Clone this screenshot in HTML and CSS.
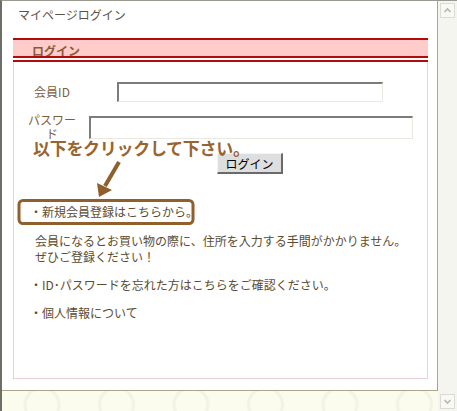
FILE: index.html
```html
<!DOCTYPE html>
<html lang="ja">
<head>
<meta charset="utf-8">
<title>マイページログイン</title>
<link rel="stylesheet" href="styles.css">
</head>
<body>
<div class="frame">
  <div class="page">
    <div class="sheet">
      <div class="title">マイページログイン</div>
      <div class="box">
        <div class="box-head"><h2>ログイン</h2></div>
        <div class="box-body">
          <div class="row row-id">
            <label class="lbl">会員ID</label>
            <input class="inp inp-id" type="text">
          </div>
          <div class="row row-pw">
            <label class="lbl">パスワード</label>
            <input class="inp inp-pw" type="password">
          </div>
          <div class="btn-row"><button class="btn">ログイン</button></div>
          <p class="item item-first">・新規会員登録はこちらから。</p>
          <p class="note">会員になるとお買い物の際に、住所を入力する手間がかかりません。<br>ぜひご登録ください！</p>
          <p class="item">・ID･パスワードを忘れた方はこちらをご確認ください。</p>
          <p class="item">・個人情報について</p>
        </div>
      </div>
    </div>
    <div class="band"></div>
  </div>
  <div class="scrollbar">
    <div class="sb-btn sb-up">
      <svg width="13" height="13" viewBox="0 0 13 13"><path d="M3.5 8 L6.5 5 L9.5 8" fill="none" stroke="#b8b8b0" stroke-width="1.6"/></svg>
    </div>
    <div class="sb-track"></div>
    <div class="sb-btn sb-down">
      <svg width="13" height="13" viewBox="0 0 13 13"><path d="M3.5 5 L6.5 8 L9.5 5" fill="none" stroke="#b8b8b0" stroke-width="1.6"/></svg>
    </div>
  </div>
</div>
<div class="annot-text">以下をクリックして下さい。</div>
<svg class="annot" width="457" height="411" viewBox="0 0 457 411">
  <line x1="119" y1="162" x2="105" y2="186" stroke="#8f5f2c" stroke-width="4"/>
  <polygon points="99,197 97,183 112,190" fill="#8f5f2c"/>
  <rect x="19" y="200.5" width="174" height="23" rx="4" ry="4" fill="none" stroke="#8f5f2c" stroke-width="3"/>
</svg>
</body>
</html>
```
FILE: styles.css
```css
* { box-sizing: border-box; }
html, body { margin: 0; padding: 0; }
body {
  position: relative;
  width: 457px;
  height: 411px;
  overflow: hidden;
  background: #fbfbee;
  font-family: "Noto Sans CJK JP", "Noto Sans", sans-serif;
  font-size: 12px;
  color: #5c4c30;
}
.frame {
  display: flex;
  height: 411px;
  border-top: 1px solid #9a9a92;
  border-left: 2px solid #6e6e68;
}
.page {
  width: 436px;
  display: flex;
  flex-direction: column;
}
.sheet {
  height: 390px;
  background: #fff;
  border-right: 1px solid #a9a68c;
  border-bottom: 1px solid #a9a68c;
  padding: 7px 0 0 0;
}
.title {
  padding-left: 16px;
  line-height: 14px;
  height: 14px;
  color: #5e5346;
}
.box {
  margin: 16px 0 0 11px;
  width: 415px;
}
.box-head {
  height: 24px;
  background: #ffcccc;
  background-clip: padding-box;
  border-top: 2px solid #b30a0a;
  border-bottom: 6px double #b30a0a;
  overflow: hidden;
}
.box-head h2 {
  margin: 0;
  padding: 4px 0 0 19px;
  font-size: 12px;
  line-height: 14px;
  font-weight: bold;
  color: #8c5a3a;
}
.box-body {
  height: 317px;
  border: 1px solid #ecd0d4;
  border-top: 0;
  padding: 20px 0 0 11px;
}
.row {
  display: flex;
}
.row-id {
  align-items: center;
  height: 20px;
}
.row-pw {
  align-items: flex-start;
  margin-top: 11px;
}
.lbl {
  width: 54px;
  text-align: center;
  line-height: 14px;
  color: #7d5f3a;
}
.inp {
  display: block;
  margin: 0;
  padding: 0;
  background: #fff;
  border-style: solid;
  border-width: 2px 1px 1px 2px;
  border-color: #7c7c7c #ebe8e0 #ebe8e0 #7c7c7c;
}
.inp-id {
  width: 266px;
  height: 20px;
  margin-left: 38px;
}
.inp-pw {
  width: 324px;
  height: 23px;
  margin-left: 10px;
  margin-top: 3px;
}
.btn-row {
  margin-top: 12px;
  padding-left: 192px;
}
.btn {
  display: block;
  width: 66px;
  height: 21px;
  margin: 0;
  padding: 0;
  font-family: "Noto Sans CJK JP", sans-serif;
  font-size: 12px;
  line-height: 17px;
  color: #000;
  background: #dedede;
  border-style: solid;
  border-width: 1px 2px 2px 1px;
  border-color: #f4f4f4 #6a6a6a #6a6a6a #f4f4f4;
}
.item, .note {
  margin: 0;
  line-height: 16px;
}
.item {
  padding-left: 5px;
  margin-top: 12px;
}
.item-first {
  margin-top: 30px;
}
.note {
  padding-left: 10px;
  margin-top: 13px;
}
.band {
  flex: 1;
  background-color: #fbfbee;
  background-image: radial-gradient(circle at 38px 14px, transparent 15px, #f3f3e3 16px, #f3f3e3 18px, transparent 19px);
  background-size: 74.5px 20px;
  background-repeat: repeat-x;
  background-position: 2px 0;
}
.scrollbar {
  width: 19px;
  display: flex;
  flex-direction: column;
  background: #f5f5f0;
  padding: 2px;
}
.sb-btn {
  width: 15px;
  height: 15px;
  display: flex;
  align-items: center;
  justify-content: center;
  background: #f8f8f4;
  border: 1px solid #dcdcd4;
}
.sb-track { flex: 1; }
.annot-text {
  position: absolute;
  left: 33px;
  top: 137px;
  font-size: 17px;
  line-height: 22px;
  font-weight: bold;
  color: #98642f;
  letter-spacing: -0.3px;
}
.annot {
  position: absolute;
  left: 0;
  top: 0;
  pointer-events: none;
}
```
